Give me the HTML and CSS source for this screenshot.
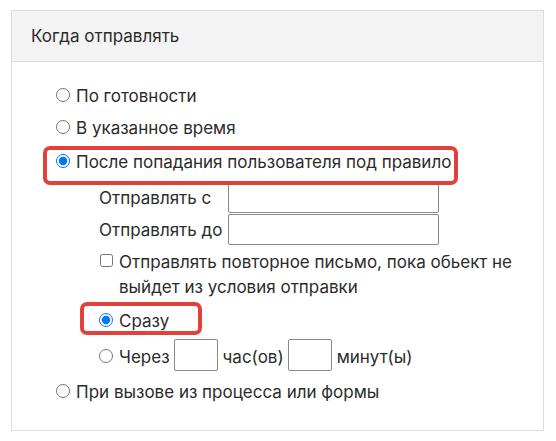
FILE: index.html
```html
<!DOCTYPE html>
<html lang="ru">
<head>
<meta charset="utf-8">
<title>Когда отправлять</title>
<link rel="stylesheet" href="styles.css">
</head>
<body>
<div class="panel">
  <div class="panel-head">Когда отправлять</div>
  <div class="panel-body">
    <label class="opt"><input type="radio" name="when">По готовности</label>
    <label class="opt"><input type="radio" name="when">В указанное время</label>
    <label class="opt opt-third mark mark-wide"><input type="radio" name="when" checked>После попадания пользователя под правило</label>
    <div class="sub">
      <div class="range">
        <span class="range-label">Отправлять с</span><input class="field field-wide" type="text">
        <span class="range-label">Отправлять до</span><input class="field field-wide" type="text">
      </div>
      <label class="check"><input type="checkbox"><span class="check-text">Отправлять повторное письмо, пока обьект не выйдет из условия отправки</span></label>
      <label class="opt opt-now mark mark-small"><input type="radio" name="delay" checked>Сразу</label>
      <div class="opt opt-delay"><input type="radio" name="delay"><span>Через</span><input class="field field-short" type="text"><span>час(ов)</span><input class="field field-short" type="text"><span>минут(ы)</span></div>
    </div>
    <label class="opt opt-last"><input type="radio" name="when">При вызове из процесса или формы</label>
  </div>
</div>
</body>
</html>
```

FILE: styles.css
```css
*, *::before, *::after { box-sizing: border-box; }

body {
  margin: 0;
  font-family: Inter, "Noto Sans", sans-serif;
  font-size: 17px;
  color: #2b2b2b;
  background: #fff;
}

.panel {
  margin: 10px 0 0 11px;
  width: 533px;
  height: 421px;
  border: 1px solid #dcdcdc;
  background: #fff;
}

.panel-head {
  height: 51px;
  background: #f3f3f3;
  border-bottom: 1px solid #dcdcdc;
  padding-left: 19px;
  line-height: 50px;
  font-size: 17px;
}

.panel-body {
  padding: 18px 0 0 44px;
}

.opt {
  display: flex;
  align-items: center;
  height: 32px;
  position: relative;
  white-space: nowrap;
}

.opt input[type="radio"] {
  width: 14px;
  height: 14px;
  margin: -3px 6px 0 0;
  flex: none;
}

.opt-third { margin-top: 2px; }

.sub {
  padding-left: 43px;
  margin-top: 4px;
}

.range {
  display: grid;
  grid-template-columns: 129px 211px;
  grid-auto-rows: 32px;
  align-items: start;
}

.range-label {
  line-height: 32px;
}

.field {
  border: 1px solid #8a8a8a;
  border-radius: 2px;
  background: #fff;
  padding: 0;
  margin: 0;
  font: inherit;
}

.field-wide {
  width: 211px;
  height: 31px;
}

.check {
  display: flex;
  align-items: flex-start;
  margin-top: 4px;
  line-height: 25px;
}

.check input[type="checkbox"] {
  width: 13px;
  height: 13px;
  margin: 4px 6px 0 1px;
  flex: none;
}

.check-text {
  width: 410px;
}

.opt-now { margin-top: 5px; }

.opt-delay { margin-top: 4px; }

.field-short {
  width: 44px;
  height: 32px;
  margin: -4px 5px 0 4px;
}

.opt-last { margin-top: 3px; }

.mark::after {
  content: "";
  position: absolute;
  border: 4px solid #e2403a;
  border-radius: 7px;
  pointer-events: none;
}

.mark-wide::after {
  left: -13px;
  top: 0;
  width: 415px;
  height: 39px;
}

.mark-small::after {
  left: -19px;
  top: -3px;
  width: 122px;
  height: 33px;
}
```
